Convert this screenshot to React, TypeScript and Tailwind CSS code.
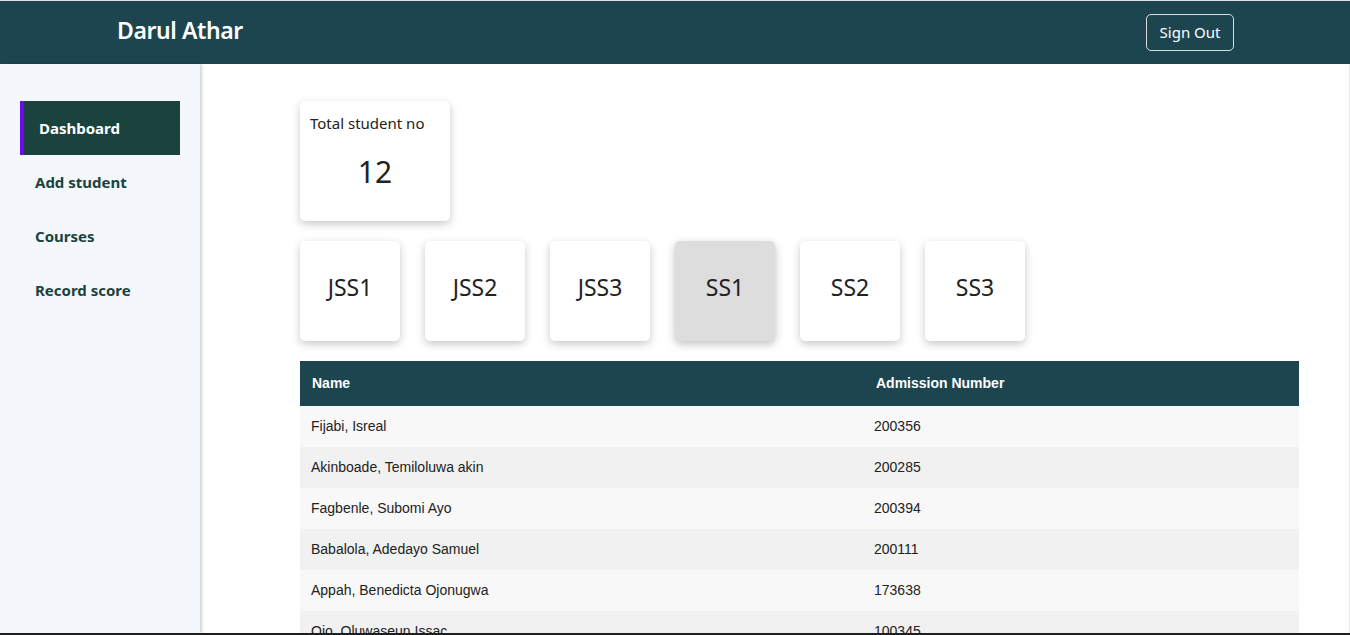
const navItems = ["Dashboard", "Add student", "Courses", "Record score"];
const classes = ["JSS1", "JSS2", "JSS3", "SS1", "SS2", "SS3"];
const students = [
  { name: "Fijabi, Isreal", admission: "200356" },
  { name: "Akinboade, Temiloluwa akin", admission: "200285" },
  { name: "Fagbenle, Subomi Ayo", admission: "200394" },
  { name: "Babalola, Adedayo Samuel", admission: "200111" },
  { name: "Appah, Benedicta Ojonugwa", admission: "173638" },
  { name: "Ojo, Oluwaseun Issac", admission: "100345" },
  { name: "Adeyemi, Tolulope Grace", admission: "200412" },
];

export default function App() {
  return (
    <div
      className="h-[635px] flex flex-col overflow-hidden border-t border-[#e3e3e3] border-b-2 border-b-[#1f1f1f] bg-white"
      style={{ fontFamily: '"Noto Sans", "Open Sans", sans-serif' }}
    >
      {/* Top bar */}
      <header className="h-[63px] shrink-0 bg-[#1d4550] flex items-center justify-between pl-[117px] pr-[116px]">
        <h1 className="text-white text-[23px] font-semibold tracking-[-0.4px] mb-[5px]">Darul Athar</h1>
        <button
          type="button"
          className="h-[37px] w-[88px] rounded-[5px] border border-[#d8dde0] text-white text-[15px]"
        >
          Sign Out
        </button>
      </header>

      <div className="flex flex-1 min-h-0">
        {/* Sidebar */}
        <aside className="w-[200px] shrink-0 bg-[#f4f7fc] pt-[37px] pl-[20px] pr-[20px] shadow-[2px_0_3px_rgba(0,0,0,0.18)] z-10">
          {navItems.map((item, i) =>
            i === 0 ? (
              <div
                key={item}
                className="h-[54px] flex items-center bg-[#1b433d] border-l-[4px] border-[#6a0dea] pl-[15px] text-white text-[15px] font-bold"
              >
                {item}
              </div>
            ) : (
              <div
                key={item}
                className="h-[54px] flex items-center pl-[15px] text-[#1b433d] text-[15px] font-bold"
              >
                {item}
              </div>
            )
          )}
        </aside>

        {/* Main */}
        <main className="flex-1 min-w-0 pl-[100px] pt-[37px] border-r border-[#e6e6e6]">
          <div className="w-[150px] h-[120px] rounded-[5px] bg-white shadow-[0_3px_8px_rgba(0,0,0,0.22)] px-[10px] pt-[11px]">
            <p className="text-[15px] text-[#222]">Total student no</p>
            <p className="text-center text-[30px] text-[#222] mt-[14px]">12</p>
          </div>

          <div className="flex gap-[25px] mt-[20px]">
            {classes.map((c) => (
              <div
                key={c}
                className={
                  c === "SS1"
                    ? "w-[100px] h-[100px] rounded-[5px] bg-[#dddddd] shadow-[0_3px_8px_rgba(0,0,0,0.25)] flex items-center justify-center pb-[7px] text-[23px] text-[#222]"
                    : "w-[100px] h-[100px] rounded-[5px] bg-white shadow-[0_3px_8px_rgba(0,0,0,0.22)] flex items-center justify-center pb-[7px] text-[23px] text-[#222]"
                }
              >
                {c}
              </div>
            ))}
          </div>

          <table
            className="w-[999px] mt-[20px] border-collapse text-left"
            style={{ fontFamily: '"Liberation Sans", Arial, sans-serif' }}
          >
            <thead>
              <tr className="bg-[#1d4550] h-[45px] text-white text-[14px] font-bold">
                <th className="w-[564px] pl-[12px]">Name</th>
                <th className="pl-[12px]">Admission Number</th>
              </tr>
            </thead>
            <tbody>
              {students.map((s, i) => (
                <tr
                  key={s.admission}
                  className={
                    i % 2 === 0
                      ? "h-[41px] bg-[#f8f8f8] text-[14px] text-[#222]"
                      : "h-[41px] bg-[#f1f1f1] text-[14px] text-[#222]"
                  }
                >
                  <td className="pl-[11px]">{s.name}</td>
                  <td className="pl-[10px]">{s.admission}</td>
                </tr>
              ))}
            </tbody>
          </table>
        </main>
      </div>
    </div>
  );
}
